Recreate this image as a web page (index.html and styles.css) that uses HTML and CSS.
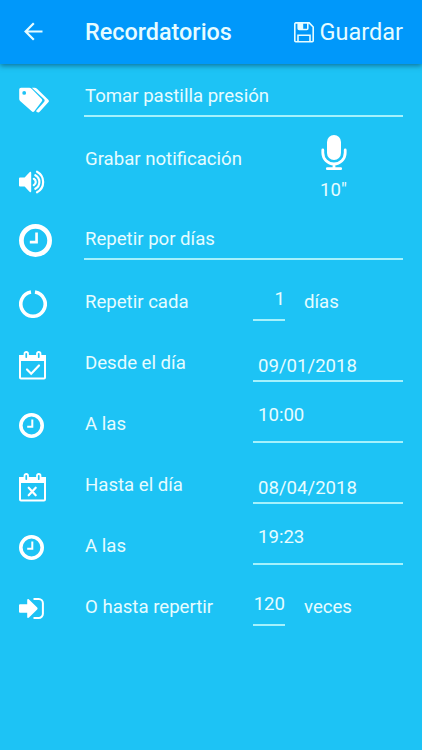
FILE: index.html
```html
<!DOCTYPE html>
<html lang="es">
<head>
    <meta charset="UTF-8">
    <meta name="viewport" content="width=device-width, initial-scale=1.0">
    <title>Recordatorios</title>
    <link rel="stylesheet" href="styles.css">
</head>
<body>
    <header class="toolbar">
        <svg class="back" width="20" height="20" viewBox="0 0 20 20"><path d="M18.5 9.5H1.5M9.8 1.2L1.6 9.5l8.2 8.3"/></svg>
        <h1>Recordatorios</h1>
        <button class="save">
            <svg width="20" height="21" viewBox="0 0 20 21">
                <path class="line" d="M1.8.9h13.4l4 4.1v13.8a1 1 0 0 1-1 1H1.8a1 1 0 0 1-1-1V1.9a1 1 0 0 1 1-1zM4 19.5v-6.3h12v6.3M4.2 1v5.5a1 1 0 0 0 1 1h7.6a1 1 0 0 0 1-1V1"/>
                <path d="M4.2 1h5v6.3h-5z"/>
            </svg>
            <span>Guardar</span>
        </button>
    </header>

    <main class="form">
        <div class="row row-title">
            <svg class="icon" width="31" height="26" viewBox="0 0 31 26">
                <path fill-rule="evenodd" d="M2 .8h8.3a3.5 3.5 0 0 1 2.3.9l10.1 10.2a1.8 1.8 0 0 1 0 2.5l-7.4 9.8a1.8 1.8 0 0 1-2.6 0L1.1 14A3 3 0 0 1 .2 11.8V2.6A1.8 1.8 0 0 1 2 .8zM5.2 4a1.9 1.9 0 1 0 0 3.8 1.9 1.9 0 0 0 0-3.8z"/>
                <path d="M12.8.8h2.8a3.5 3.5 0 0 1 2.4 1l11.3 11a1.8 1.8 0 0 1 0 2.5l-8.4 9.2a2.3 2.3 0 0 1-3.3.2l-.6-.6 8-9.2a2.2 2.2 0 0 0 0-3z"/>
            </svg>
            <div class="field wide">Tomar pastilla presión</div>
        </div>

        <div class="row row-audio">
            <svg class="icon" width="27" height="24" viewBox="0 0 27 24">
                <path d="M0 8.5a1 1 0 0 1 1-1h4.6l5.2-5.4c.6-.6 1.4-.3 1.4.6v18.6c0 .9-.8 1.2-1.4.6l-5.2-5.3H1a1 1 0 0 1-1-1z"/>
                <path class="wave" d="M14.8 8.8a3.6 3.6 0 0 1 0 6.4M16.3 5.2a7.7 7.7 0 0 1 0 13.6M18 1.7a11.7 11.7 0 0 1 0 20.6"/>
            </svg>
            <label>Grabar notificación</label>
            <div class="recorder">
                <svg width="26" height="36" viewBox="0 0 26 36">
                    <rect x="6" y="0" width="14" height="25" rx="7"/>
                    <path class="stand" d="M1.8 15v2.8a11.2 11.2 0 0 0 22.4 0V15M13 29v4M6.3 33.7h13.4"/>
                </svg>
                <span>10"</span>
            </div>
        </div>

        <div class="row row-repeat">
            <svg class="icon clock" width="33" height="33" viewBox="0 0 25 25"><circle cx="12.5" cy="12.5" r="10.7"/><path d="M13.3 6.5v7.2H8.2"/></svg>
            <div class="field wide">Repetir por días</div>
        </div>

        <div class="row">
            <svg class="icon ring" width="28" height="28" viewBox="0 0 28 28"><path d="M16 2a12.2 12.2 0 1 1-4 0"/></svg>
            <label>Repetir cada</label>
            <div class="field number">1</div>
            <span class="unit">días</span>
        </div>

        <div class="row">
            <svg class="icon calendar" width="27" height="29" viewBox="0 0 27 29">
                <path class="frame" d="M1 5h25v21.5a1 1 0 0 1-1 1H2a1 1 0 0 1-1-1z"/>
                <path d="M0 5.5A1.5 1.5 0 0 1 1.5 4h24A1.5 1.5 0 0 1 27 5.5V10H0z"/>
                <rect class="ring-hole" x="5.5" y="1" width="3.5" height="7" rx="1.7"/>
                <rect class="ring-hole" x="18" y="1" width="3.5" height="7" rx="1.7"/>
                <path class="mark" d="M8 18.5l4.2 4.2 7.8-8.2"/>
            </svg>
            <label>Desde el día</label>
            <div class="field date">09/01/2018</div>
        </div>

        <div class="row">
            <svg class="icon clock" width="25" height="25" viewBox="0 0 25 25"><circle cx="12.5" cy="12.5" r="10.7"/><path d="M13.3 6.5v7.2H8.2"/></svg>
            <label>A las</label>
            <div class="field time">10:00</div>
        </div>

        <div class="row">
            <svg class="icon calendar" width="27" height="29" viewBox="0 0 27 29">
                <path class="frame" d="M1 5h25v21.5a1 1 0 0 1-1 1H2a1 1 0 0 1-1-1z"/>
                <path d="M0 5.5A1.5 1.5 0 0 1 1.5 4h24A1.5 1.5 0 0 1 27 5.5V10H0z"/>
                <rect class="ring-hole" x="5.5" y="1" width="3.5" height="7" rx="1.7"/>
                <rect class="ring-hole" x="18" y="1" width="3.5" height="7" rx="1.7"/>
                <path class="mark" d="M9.7 14.7l7 7.6M16.7 14.7l-7 7.6"/>
            </svg>
            <label>Hasta el día</label>
            <div class="field date">08/04/2018</div>
        </div>

        <div class="row">
            <svg class="icon clock" width="25" height="25" viewBox="0 0 25 25"><circle cx="12.5" cy="12.5" r="10.7"/><path d="M13.3 6.5v7.2H8.2"/></svg>
            <label>A las</label>
            <div class="field time">19:23</div>
        </div>

        <div class="row">
            <svg class="icon exit" width="25" height="21" viewBox="0 0 25 21">
                <path d="M0 7.2a1 1 0 0 1 1-1h7.2V2.2c0-1.2 1-1.6 1.8-.8l8.2 8.2a1.4 1.4 0 0 1 0 1.9L10 19.6c-.8.8-1.8.4-1.8-.8v-4H1a1 1 0 0 1-1-1z"/>
                <path class="door" d="M14.5 1.1h5.2a4.2 4.2 0 0 1 4.2 4.2v10.4a4.2 4.2 0 0 1-4.2 4.2h-5.2"/>
            </svg>
            <label>O hasta repertir</label>
            <div class="field number">120</div>
            <span class="unit">veces</span>
        </div>
    </main>
</body>
</html>
```
FILE: styles.css
```css
* {
    box-sizing: border-box;
}

body {
    margin: 0;
    min-height: 100vh;
    background-color: #1dc3f5;
    color: #e6fcff;
    font-family: Roboto, "Liberation Sans", sans-serif;
    font-size: 18.6px;
    line-height: 22px;
}

svg {
    display: block;
    flex: none;
    fill: #fff;
}

.toolbar {
    display: flex;
    align-items: center;
    height: 64px;
    padding: 0 19px 0 24px;
    background-color: #0098fa;
    box-shadow: 0 2px 5px rgba(0, 50, 80, 0.5);
}

.toolbar h1 {
    margin: 0 auto 0 41px;
    font-size: 23.4px;
    font-weight: 500;
}

.back {
    fill: none;
    stroke: #e6fcff;
    stroke-width: 2.2;
}

.save {
    display: flex;
    align-items: center;
    gap: 6px;
    padding: 0;
    border: none;
    background: none;
    color: inherit;
    font: inherit;
    font-size: 23.5px;
}

.save svg {
    fill: #e6fcff;
}

.save .line {
    fill: none;
    stroke: #e6fcff;
    stroke-width: 1.6;
}

.row {
    display: grid;
    grid-template-columns: 65px 169px 32px 1fr;
    align-items: center;
    height: 61px;
    padding: 0 19px;
}

.row-audio {
    height: 85px;
}

.icon {
    margin-top: 4px;
}

.calendar {
    margin-top: 6px;
}

.row-title .icon {
    margin-top: 10px;
}

.row-audio .icon {
    margin-top: 29px;
}

.row-repeat .icon {
    margin-top: 0;
}

label {
    padding-left: 1px;
}

.row-audio label {
    align-self: start;
    padding-top: 23px;
}

.recorder {
    grid-column: 3 / 5;
    display: flex;
    flex-direction: column;
    align-items: center;
    gap: 8px;
    width: 161px;
    align-self: start;
    padding-top: 10px;
}

.field {
    align-self: start;
    height: 50px;
    border-bottom: 2px solid #a5f1fc;
}

.wide {
    grid-column: 2 / 5;
    height: 53px;
    padding-top: 21px;
    padding-left: 1px;
}

.row-repeat .wide {
    height: 50px;
    padding-top: 18px;
}

.date,
.time {
    grid-column: 3 / 5;
    padding-left: 5px;
}

.date {
    padding-top: 23px;
}

.time {
    padding-top: 11px;
}

.number {
    padding-top: 17px;
    text-align: right;
}

.unit {
    padding-left: 19px;
}

.wave,
.stand,
.ring path,
.frame,
.mark,
.door,
.clock circle,
.clock path {
    fill: none;
    stroke: #fff;
    stroke-width: 2;
}

.wave {
    stroke-width: 2.2;
    stroke-linecap: round;
}

.stand {
    stroke-width: 2.8;
    stroke-linecap: round;
}

.ring path {
    stroke-width: 3.6;
}

.clock circle {
    stroke-width: 3.6;
}

.mark {
    stroke-width: 2.2;
    stroke-linecap: round;
}

.ring-hole {
    fill: #1dc3f5;
    stroke: #fff;
    stroke-width: 1.8;
}
```
